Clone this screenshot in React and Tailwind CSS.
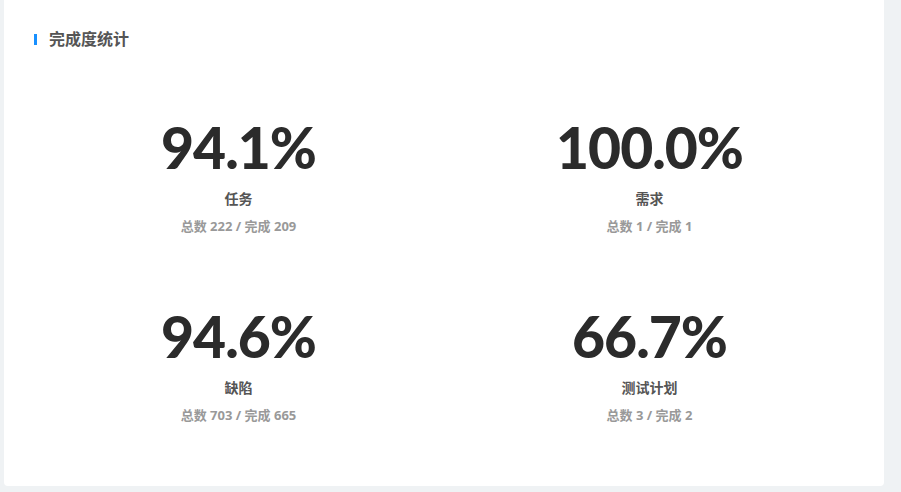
const stats = [
  { pct: '94.1%', name: '任务', total: 222, done: 209 },
  { pct: '100.0%', name: '需求', total: 1, done: 1 },
  { pct: '94.6%', name: '缺陷', total: 703, done: 665 },
  { pct: '66.7%', name: '测试计划', total: 3, done: 2 },
];

const StatItem = ({ stat }) => (
  <div className="flex flex-col items-center">
    <div
      className="text-[57px] leading-[68px] font-black text-[#2b2b2b] tracking-[-1px]"
      style={{ fontFamily: 'Lato, "Noto Sans", sans-serif' }}
    >
      {stat.pct}
    </div>
    <div className="mt-[8px] text-[14px] leading-[20px] font-bold text-[#555]">{stat.name}</div>
    <div className="mt-[8px] text-[13px] leading-[18px] font-bold text-[#999]">
      总数 {stat.total} / 完成 {stat.done}
    </div>
  </div>
);

export default function App() {
  return (
    <div
      className="w-[901px] h-[492px] bg-[#eff2f4] pl-[4px] pr-[17px] pb-[6px] overflow-hidden"
      style={{ fontFamily: '"Noto Sans", "Noto Sans CJK SC", sans-serif' }}
    >
      <div className="h-full bg-white rounded-b-[4px] px-[29px] pt-[30px]">
        <div className="flex items-center gap-[12px] pl-[1px]">
          <span className="w-[3px] h-[11px] bg-[#1890ff]" />
          <h2 className="text-[16px] leading-[18px] font-bold text-[#555]">完成度统计</h2>
        </div>
        <div className="grid grid-cols-2 gap-y-[67px] mt-[65px]">
          {stats.map((s) => (
            <StatItem key={s.name} stat={s} />
          ))}
        </div>
      </div>
    </div>
  );
}
